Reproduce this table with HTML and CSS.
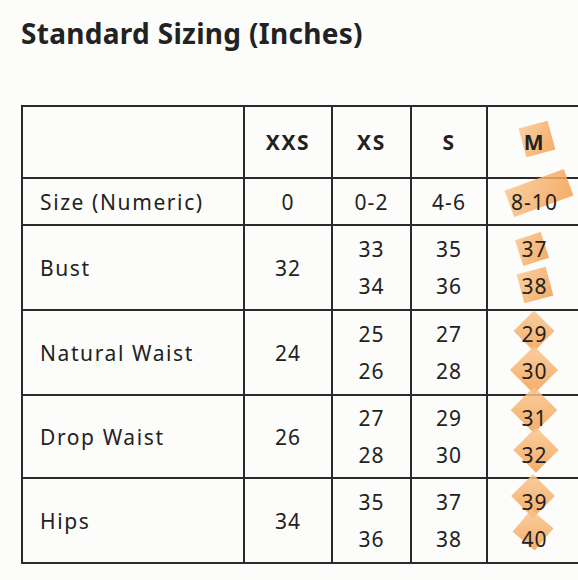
FILE: index.html
```html
<!DOCTYPE html>
<html lang="en">
<head>
<meta charset="utf-8">
<title>Standard Sizing</title>
<link rel="stylesheet" href="styles.css">
</head>
<body>
<h1 class="title">Standard Sizing (Inches)</h1>
<div class="table-wrap">
<table class="sizes">
  <colgroup>
    <col class="c-label"><col class="c-xxs"><col class="c-xs"><col class="c-s"><col class="c-m">
  </colgroup>
  <tr class="r-head">
    <th></th><th>XXS</th><th>XS</th><th>S</th><th><span class="hl hl-m">M</span></th>
  </tr>
  <tr class="r-num">
    <td class="label">Size (Numeric)</td><td>0</td><td>0-2</td><td>4-6</td><td><span class="hl hl-810">8-10</span></td>
  </tr>
  <tr class="r-big">
    <td class="label">Bust</td><td>32</td>
    <td><div>33</div><div>34</div></td>
    <td><div>35</div><div>36</div></td>
    <td><div><span class="hl hl-37">37</span></div><div><span class="hl hl-38">38</span></div></td>
  </tr>
  <tr class="r-big">
    <td class="label">Natural Waist</td><td>24</td>
    <td><div>25</div><div>26</div></td>
    <td><div>27</div><div>28</div></td>
    <td><div><span class="hl hl-29">29</span></div><div><span class="hl hl-30">30</span></div></td>
  </tr>
  <tr class="r-big r-drop">
    <td class="label">Drop Waist</td><td>26</td>
    <td><div>27</div><div>28</div></td>
    <td><div>29</div><div>30</div></td>
    <td><div><span class="hl hl-31">31</span></div><div><span class="hl hl-32">32</span></div></td>
  </tr>
  <tr class="r-big">
    <td class="label">Hips</td><td>34</td>
    <td><div>35</div><div>36</div></td>
    <td><div>37</div><div>38</div></td>
    <td><div><span class="hl hl-39">39</span></div><div><span class="hl hl-40">40</span></div></td>
  </tr>
</table>
</div>
</body>
</html>
```
FILE: styles.css
```css
html {
  margin: 0;
  padding: 0;
  background: #fcfcfa;
}
body {
  margin: 0;
  padding: 0;
  font-family: "Noto Sans", "Open Sans", sans-serif;
  color: #222;
  overflow: hidden;
}
.title {
  margin: 0;
  padding: 14px 0 0 21px;
  font-size: 28px;
  font-weight: 700;
  line-height: 38px;
  height: 105px;
  box-sizing: border-box;
  letter-spacing: 0.3px;
}
.table-wrap {
  width: 100%;
  overflow: hidden;
  padding-left: 21px;
  box-sizing: border-box;
}
.sizes {
  border-collapse: collapse;
  table-layout: fixed;
  width: 560px;
  font-size: 21px;
  letter-spacing: 1.1px;
}
.c-label { width: 222px; }
.c-xxs { width: 88px; }
.c-xs { width: 79px; }
.c-s { width: 76px; }
.c-m { width: 95px; }
.sizes th, .sizes td {
  border: 2px solid #2a2a2a;
  padding: 0;
  text-align: center;
  vertical-align: middle;
}
.sizes th {
  font-weight: 700;
  letter-spacing: 1.6px;
}
.r-head { height: 72px; }
.r-num { height: 47px; }
.r-big { height: 85px; }
.r-drop { height: 83px; }
.sizes td.label {
  text-align: left;
  padding-left: 17px;
  letter-spacing: 1.6px;
}
.sizes td div {
  line-height: 37px;
}
.hl {
  position: relative;
  display: inline-block;
  isolation: isolate;
}
.hl::before {
  content: "";
  position: absolute;
  left: 50%;
  top: 50%;
  width: var(--w, 30px);
  height: var(--h, 30px);
  transform: translate(-50%, -50%) translate(var(--dx, 0px), var(--dy, 0px)) rotate(var(--r, 45deg));
  background: linear-gradient(135deg, #f9c690, #f39f4e);
  opacity: 0.85;
  z-index: -1;
}
.hl-m { --w: 30px; --h: 30px; --r: -15deg; --dx: 2px; --dy: -3px; }
.hl-810 { --w: 63px; --h: 28px; --r: -20deg; --dx: 5px; --dy: -9px; }
.hl-37 { --w: 27px; --h: 27px; --r: -18deg; --dx: -2px; --dy: 0px; }
.hl-38 { --w: 30px; --h: 30px; --r: -15deg; --dx: 1px; --dy: -1px; }
.hl-29 { --w: 29px; --h: 29px; --r: 45deg; --dx: 0px; --dy: -3px; }
.hl-30 { --w: 34px; --h: 34px; --r: 45deg; --dx: 0px; --dy: -1px; }
.hl-31 { --w: 33px; --h: 33px; --r: 45deg; --dx: 0px; --dy: -8px; }
.hl-32 { --w: 32px; --h: 32px; --r: 45deg; --dx: 2px; --dy: -5px; }
.hl-39 { --w: 31px; --h: 31px; --r: 45deg; --dx: -1px; --dy: -6px; }
.hl-40 { --w: 29px; --h: 29px; --r: 40deg; --dx: -1px; --dy: -9px; }
```
